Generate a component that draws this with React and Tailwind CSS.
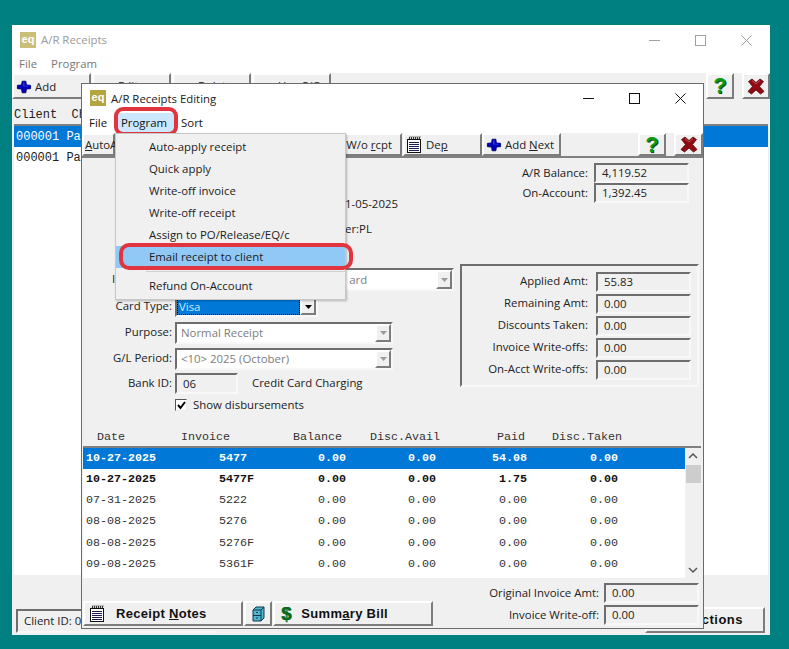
const ui = "font-['Open_Sans','Noto_Sans',sans-serif] text-[11.4px]";
const mono = "font-['Liberation_Mono',monospace]";
const raised = "border-2 border-t-white border-l-white border-r-[#7c7c7c] border-b-[#7c7c7c]";
const sunken = "border-2 border-t-[#6e6e6e] border-l-[#6e6e6e] border-r-[#f8f8f8] border-b-[#f8f8f8]";

function EqIcon() {
  return (
    <span className="flex h-4 w-4 shrink-0 items-center justify-center bg-[#b5a540] font-['Liberation_Sans',sans-serif] text-[11px] font-bold leading-none text-white">
      eq
    </span>
  );
}

function WinControls({ color, gap }) {
  return (
    <div className={`flex items-center ${gap}`}>
      <svg width="11" height="11" viewBox="0 0 11 11" stroke={color} fill="none">
        <path d="M0 5.500H11" />
      </svg>
      <svg width="11" height="11" viewBox="0 0 11 11" stroke={color} fill="none">
        <rect x="0.500" y="0.500" width="10" height="10" />
      </svg>
      <svg width="11" height="11" viewBox="0 0 11 11" stroke={color} fill="none">
        <path d="M0.500 0.500L10.500 10.500M10.500 0.500L0.500 10.500" />
      </svg>
    </div>
  );
}

function PlusIcon() {
  return (
    <svg width="16" height="14" viewBox="0 0 17 17" preserveAspectRatio="none" className="shrink-0">
      <path d="M6.500 1.500h4l.5 4.500 4.500.5v4l-4.500.5-.5 4.500h-4L6 11l-4.500-.5v-4L6 6z" fill="#0000b8" stroke="#000070" strokeWidth="1" strokeLinejoin="round" />
      <path d="M7.500 3h1.500v4H13v1H7.500z" fill="#2a3ce0" />
    </svg>
  );
}

function HelpIcon() {
  return (
    <span className="font-['Liberation_Sans',sans-serif] text-[22px] font-bold leading-none text-[#0d9a12] [text-shadow:1px_1px_0_#064d08]">
      ?
    </span>
  );
}

function CloseIcon() {
  return (
    <svg width="18" height="17" viewBox="0 0 18 17">
      <path d="M1.500 3.500L5 1l4 3.500L13 1l3.500 2.500L12.500 8.500l4.500 5L13.500 16 9 12l-4.500 4L1 13.500l4.500-5z" fill="#8f0a12" stroke="#5a0a0e" strokeWidth="0.800" strokeLinejoin="round" />
      <path d="M5 2.500l4 3.500 4-3.500" fill="none" stroke="#c96068" strokeWidth="0.800" />
    </svg>
  );
}

function NoteIcon() {
  return (
    <svg width="16" height="17" viewBox="0 0 16 17" className="shrink-0">
      <rect x="1.500" y="3.500" width="13" height="13" fill="#fff" stroke="#111" />
      <path d="M3 3.500l1-3M5 3.500l1-3M7 3.500l1-3M9 3.500l1-3M11 3.500l1-3M13 3.500l1-3" stroke="#111" />
      <path d="M3 6.500h10M3 8.500h10M3 10.500h10M3 12.500h10M3 14.500h10" stroke="#1c1c50" />
    </svg>
  );
}

function CabinetIcon() {
  return (
    <svg width="13" height="16" viewBox="0 0 13 16">
      <path d="M1 4l3-3h8v11l-3 3H1z" fill="#4fb6d2" stroke="#0f3a48" />
      <path d="M1 4h8v11M9 4l3-3M1 9.500h8" fill="none" stroke="#0f3a48" />
      <path d="M4 6.500h2M4 12h2" stroke="#0f3a48" />
    </svg>
  );
}

function ToolButton({ className, children }) {
  return (
    <div className={`flex shrink-0 items-center whitespace-nowrap bg-[#f0f0f0] ${raised} ${className}`}>{children}</div>
  );
}

function Arrow({ disabled }) {
  return (
    <span className={`flex w-4 shrink-0 items-center justify-center self-stretch bg-[#f0f0f0] ${raised}`}>
      <svg width="7" height="4" viewBox="0 0 7 4">
        <path d="M0 0h7L3.500 4z" fill={disabled ? "#9a9a9a" : "#000"} />
      </svg>
    </span>
  );
}

function Field({ className, children }) {
  return (
    <div className={`flex items-center bg-[#f0f0f0] pl-1.5 leading-none text-[#222] ${sunken} ${className}`}>
      {children}
    </div>
  );
}

function SummaryRow({ label, value }) {
  return (
    <div className="flex h-[22px] items-center justify-end gap-2">
      <span className="pb-0.5 text-[#222]">{label}</span>
      <Field className="h-5 w-[95px]">{value}</Field>
    </div>
  );
}

function FormRow({ label, children, className = "" }) {
  return (
    <div className={`flex items-center ${className}`}>
      <span className="w-[90px] pb-0.5 text-right leading-none text-[#222]">{label}</span>
      <div className="ml-[3px] flex">{children}</div>
    </div>
  );
}

function Select({ value, className }) {
  return (
    <div className={`flex items-stretch bg-white pl-1 ${sunken} ${className}`}>
      <span className="flex-1 self-center leading-none text-[#7d7d7d]">{value}</span>
      <Arrow disabled />
    </div>
  );
}

const rows = [
  ["10-27-2025", "5477", "0.00", "0.00", "54.08", "0.00"],
  ["10-27-2025", "5477F", "0.00", "0.00", "1.75", "0.00"],
  ["07-31-2025", "5222", "0.00", "0.00", "0.00", "0.00"],
  ["08-08-2025", "5276", "0.00", "0.00", "0.00", "0.00"],
  ["08-08-2025", "5276F", "0.00", "0.00", "0.00", "0.00"],
  ["09-08-2025", "5361F", "0.00", "0.00", "0.00", "0.00"],
];

function rowTone(i) {
  if (i === 0) return "bg-[#0078d7] font-bold text-white";
  if (i === 1) return "font-bold text-[#111]";
  return "text-[#333]";
}

function MenuItem({ children, active }) {
  return (
    <div className={`flex h-[22px] items-center pl-[33px] text-[#1c1c1c] ${active ? "bg-[#90c8f6]" : ""}`}>
      {children}
    </div>
  );
}

function MainWindow() {
  return (
    <div className={`absolute left-3 top-[25px] flex h-[610px] w-[758px] flex-col bg-[#f0f0f0] ${ui}`}>
      <div className="bg-white">
        <div className="flex h-[27px] items-center justify-between pl-2 pr-[18px] pt-[3px]">
          <div className="flex items-center gap-[5px] text-[#9a9a9a]">
            <span className="opacity-70"><EqIcon /></span>
            A/R Receipts
          </div>
          <WinControls color="#a0a0a0" gap="gap-[35px]" />
        </div>
        <div className="flex h-[21px] items-center gap-[14px] pl-[7px] pt-[2px] text-[#777]">
          <span>File</span>
          <span>Program</span>
        </div>
      </div>
      <div className="flex h-[26px] items-stretch">
        <ToolButton className="w-[79px] gap-[3px] pl-[2px] pt-0.5 text-[#222]"><PlusIcon />Add</ToolButton>
        <ToolButton className="ml-px w-[79px] pl-6 text-[#222]">Edit</ToolButton>
        <ToolButton className="ml-px w-[79px] pl-6 text-[#222]">Delete</ToolButton>
        <ToolButton className="ml-px w-[79px] pl-6 text-[#222]">Use C/O</ToolButton>
        <ToolButton className="ml-auto w-[28px] justify-center"><HelpIcon /></ToolButton>
        <ToolButton className="ml-2 w-[28px] justify-center"><CloseIcon /></ToolButton>
      </div>
      <div className={`flex h-[25px] items-center pl-0.5 pt-1.5 text-[12px] text-[#222] ${mono}`}>
        Client&nbsp;&nbsp;Ch
      </div>
      <div className={`mx-0.5 h-[451px] border-t-2 border-t-[#808080] bg-white text-[12px] ${mono}`}>
        <div className="flex h-[21px] items-center bg-[#0078d7] pl-0.5 text-white">000001 Pay</div>
        <div className="flex h-[21px] items-center pl-0.5 text-[#222]">000001 Pay</div>
      </div>
      <div className="mt-auto flex items-end justify-between pb-0.5 pl-1 pr-[5px]">
        <Field className="h-6 w-[200px] border-r-0 pl-1">Client ID: 00</Field>
        <ToolButton className="h-[26px] w-[120px] justify-end pr-[20px] font-['Liberation_Sans',sans-serif] text-[13px] font-bold tracking-[0.5px] text-[#111]">
          Transactions
        </ToolButton>
      </div>
    </div>
  );
}

function EditDialog() {
  return (
    <div className={`absolute left-[81px] top-[83px] flex h-[546px] w-[623px] flex-col border border-[#6b6b6b] bg-[#f0f0f0] ${ui}`}>
      <div className="bg-white">
        <div className="flex h-[28px] items-center justify-between pl-2 pr-[17px]">
          <div className="flex items-center gap-[5px] text-[#222]">
            <EqIcon />
            <span className="pt-px">A/R Receipts Editing</span>
          </div>
          <WinControls color="#111" gap="gap-[35px]" />
        </div>
        <div className="flex h-[21px] items-center text-[#111]">
          <span className="ml-[7px]">File</span>
          <span className="ml-[74px]">Sort</span>
        </div>
      </div>
      <div className="flex h-[25px] items-stretch border-b-2 border-b-[#808080]">
        <ToolButton className="w-[33px] pl-px text-[#222]"><span><span className="underline">A</span>utoA</span></ToolButton>
        <ToolButton className="ml-[205px] w-[82px] justify-end pr-2 text-[#222]"><span>W/o <span className="underline">r</span>cpt</span></ToolButton>
        <ToolButton className="ml-px w-[79px] gap-1 pl-px text-[#222]"><NoteIcon /><span>De<span className="underline">p</span></span></ToolButton>
        <ToolButton className="w-[79px] gap-[3px] pl-[2px] text-[#222]"><PlusIcon /><span>Add <span className="underline">N</span>ext</span></ToolButton>
        <ToolButton className="ml-[77px] w-[28px] justify-center"><HelpIcon /></ToolButton>
        <ToolButton className="ml-2 w-[29px] justify-center"><CloseIcon /></ToolButton>
      </div>

      <div className="flex h-[274px] shrink-0">
        <div className="flex w-[378px] shrink-0 flex-col">
          <div className="ml-[263px] mt-[38px] h-4 leading-4 text-[#222]">1-05-2025</div>
          <div className="ml-[263px] mt-[9px] h-4 leading-4 text-[#222]">er:PL</div>
          <div className="mt-[31px] flex items-center">
            <span className="ml-[30px] pb-0.5 leading-none text-[#222]">I</span>
            <div className={`ml-[59px] flex h-[23px] w-[280px] items-stretch bg-white ${sunken}`}>
              <span className="flex-1 self-center pl-[173px] leading-none text-[#7d7d7d]">ard</span>
              <Arrow disabled />
            </div>
          </div>
          <FormRow label="Card Type:" className="mt-[5px]">
            <div className={`flex h-[21px] w-[143px] items-stretch bg-white ${sunken}`}>
              <span className="flex flex-1 items-center bg-[#0078d7] pl-0.5 leading-none text-[#cfeaff] outline-1 outline-dotted outline-black -outline-offset-1">Visa</span>
              <Arrow />
            </div>
          </FormRow>
          <FormRow label="Purpose:" className="mt-[5px]">
            <Select value="Normal Receipt" className="h-[22px] w-[218px]" />
          </FormRow>
          <FormRow label="G/L Period:" className="mt-1">
            <Select value="<10> 2025 (October)" className="h-[22px] w-[218px]" />
          </FormRow>
          <div className="mt-[3px] flex items-center">
            <span className="w-[90px] pb-0.5 text-right leading-none text-[#222]">Bank ID:</span>
            <Field className="ml-[3px] h-[21px] w-[63px]">06</Field>
            <span className="ml-[14px] pb-0.5 leading-none text-[#222]">Credit Card Charging</span>
          </div>
          <div className="ml-[93px] mt-[5px] flex items-center gap-[6px]">
            <span className="flex h-[12px] w-[12px] items-center justify-center border border-t-[#555] border-l-[#555] border-r-[#eee] border-b-[#eee] bg-white">
              <svg width="9" height="9" viewBox="0 0 9 9"><path d="M1 4l2.500 3L8 1" fill="none" stroke="#000" strokeWidth="2" /></svg>
            </span>
            <span className="leading-none text-[#222]">Show disbursements</span>
          </div>
        </div>

        <div className="flex min-w-0 flex-1 flex-col">
          <div className="mr-[14px] mt-1 flex flex-col">
            <div className="flex h-[21px] items-center justify-end gap-1.5">
              <span className="text-[#222]">A/R Balance:</span>
              <Field className="h-[20px] w-[95px]">4,119.52</Field>
            </div>
            <div className="flex h-[20px] items-center justify-end gap-1.5">
              <span className="text-[#222]">On-Account:</span>
              <Field className="h-[20px] w-[95px]">1,392.45</Field>
            </div>
          </div>
          <div className={`mt-[61px] flex h-[123px] w-[239px] flex-col pl-[7px] pr-[6px] pt-[5px] ${sunken}`}>
            <SummaryRow label="Applied Amt:" value="55.83" />
            <SummaryRow label="Remaining Amt:" value="0.00" />
            <SummaryRow label="Discounts Taken:" value="0.00" />
            <SummaryRow label="Invoice Write-offs:" value="0.00" />
            <SummaryRow label="On-Acct Write-offs:" value="0.00" />
          </div>
        </div>
      </div>

      <div className={`flex h-[11px] items-start whitespace-pre text-[11.7px] leading-[11px] text-[#333] ${mono}`}>
        <span className="ml-[15px] w-[84px]">Date</span>
        <span className="w-[112px]">Invoice</span>
        <span className="w-[77px]">Balance</span>
        <span className="w-[127px]">Disc.Avail</span>
        <span className="w-[55px]">Paid</span>
        <span>Disc.Taken</span>
      </div>

      <div className={`ml-px mt-[3px] flex h-[132px] w-[618px] border-t-2 border-t-[#808080] bg-white text-[11.7px] ${mono}`}>
        <div className="min-w-0 flex-1">
          {rows.map((row, i) => (
            <div key={row[0] + row[1]} className={`flex h-[21.200px] items-center ${rowTone(i)}`}>
              <span className="ml-[3px] w-[133px]">{row[0]}</span>
              <span className="w-[70px]">{row[1]}</span>
              <span className="w-[57px] text-right">{row[2]}</span>
              <span className="w-[90px] text-right">{row[3]}</span>
              <span className="w-[91px] text-right">{row[4]}</span>
              <span className="w-[91px] text-right">{row[5]}</span>
            </div>
          ))}
        </div>
        <div className="flex w-[16px] shrink-0 flex-col items-center bg-[#f0f0f0]">
          <svg width="16" height="17" viewBox="0 0 16 17"><path d="M4 10l4-4 4 4" fill="none" stroke="#555" strokeWidth="1.500" /></svg>
          <div className="h-[18px] w-[15px] bg-[#cdcdcd]" />
          <svg className="mt-auto" width="16" height="17" viewBox="0 0 16 17"><path d="M4 7l4 4 4-4" fill="none" stroke="#555" strokeWidth="1.500" /></svg>
        </div>
      </div>

      <div className="flex flex-1 items-end justify-between pb-0.5 pr-1">
        <div className="flex h-[25px] items-stretch font-['Liberation_Sans',sans-serif] text-[13px] font-bold tracking-[0.3px] text-[#111]">
          <ToolButton className="ml-px w-[160px] pl-1 pr-1">
            <NoteIcon />
            <span className="ml-[11px]">Receipt <span className="underline">N</span>otes</span>
          </ToolButton>
          <ToolButton className="ml-px w-[28px] justify-center"><CabinetIcon /></ToolButton>
          <ToolButton className="ml-px w-[160px] pl-1.5">
            <span className="text-[18px] leading-none text-[#0a6b1c] [text-shadow:1px_0_0_#0a6b1c]">$</span>
            <span className="ml-[10px]">Summ<span className="underline">a</span>ry Bill</span>
          </ToolButton>
        </div>
        <div className="flex flex-col">
          <div className="flex h-[22px] items-center justify-end gap-[5px]">
            <span className="text-[#222]">Original Invoice Amt:</span>
            <Field className="h-5 w-[95px]">0.00</Field>
          </div>
          <div className="flex h-[22px] items-center justify-end gap-[5px]">
            <span className="text-[#222]">Invoice Write-off:</span>
            <Field className="h-5 w-[95px]">0.00</Field>
          </div>
        </div>
      </div>
    </div>
  );
}

function ProgramMenu() {
  return (
    <>
      <div className={`absolute left-[117px] top-[113px] flex h-[20px] w-[57px] items-center pl-1 bg-[#cce8ff] text-[#111] ${ui}`}>
        Program
      </div>
      <div className="absolute left-[114px] top-[107px] h-[29px] w-[64px] rounded-[9px] border-4 border-[#e0343f]" />
      <div className={`absolute left-[115px] top-[133px] w-[231px] border border-[#c8c8c8] bg-[#f0f0f0] py-[2px] shadow-[1px_1px_2px_rgba(0,0,0,0.25)] ${ui}`}>
        <MenuItem>Auto-apply receipt</MenuItem>
        <MenuItem>Quick apply</MenuItem>
        <MenuItem>Write-off invoice</MenuItem>
        <MenuItem>Write-off receipt</MenuItem>
        <MenuItem>Assign to PO/Release/EQ/c</MenuItem>
        <MenuItem active>Email receipt to client</MenuItem>
        <div className="my-[3px] ml-[30px] h-px bg-[#cfcfcf]" />
        <MenuItem>Refund On-Account</MenuItem>
      </div>
      <div className="absolute left-[119px] top-[243px] h-[27px] w-[234px] rounded-[10px] border-4 border-[#e0343f]" />
    </>
  );
}

export default function App() {
  return (
    <div className="relative h-[649px] w-[789px] overflow-hidden bg-[#008080]">
      <MainWindow />
      <EditDialog />
      <ProgramMenu />
    </div>
  );
}
